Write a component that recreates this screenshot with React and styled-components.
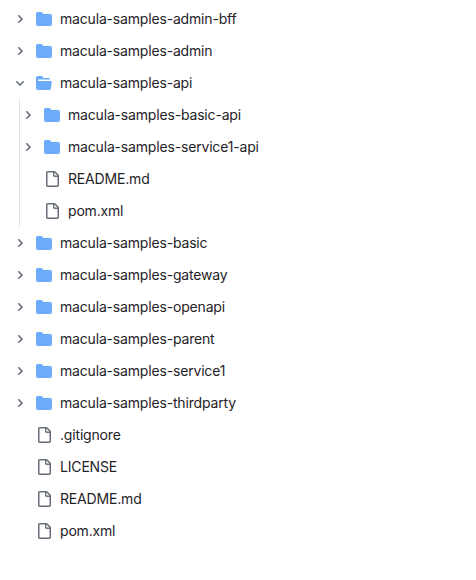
import React from "react";
import styled, { createGlobalStyle } from "styled-components";

const Global = createGlobalStyle`
  body { margin: 0; background: #fff; }
`;
const Tree = styled.ul`
  list-style: none; margin: 0; padding: 3px 0 0 12px;
  box-sizing: border-box; width: 476px; height: 580px;
  font: 14px/32px Inter, sans-serif; letter-spacing: -0.175px; color: #1f2328;
`;
const Branch = styled.ul`
  list-style: none; margin: 0 0 0 7px; padding: 0;
  border-left: 1px solid #dfe2e5;
`;
const Row = styled.div`
  display: flex; align-items: center; height: 32px; white-space: nowrap;
`;
const Toggle = styled.span`
  display: flex; width: 16px; height: 16px; justify-content: center; align-items: center;
  color: #656d76; flex: none;
`;
const IconBox = styled.span`
  display: flex; width: 16px; height: 16px; margin: 0 8px; flex: none;
  color: ${(p) => (p.$folder ? "#6cabfa" : "#656d76")};
`;
const Name = styled.span``;

const paths = {
  right: "M4.7 10c-.2 0-.4-.1-.5-.2-.3-.3-.3-.8 0-1.1L6.9 6 4.2 3.3c-.3-.3-.3-.8 0-1.1.3-.3.8-.3 1.1 0l3.3 3.2c.3.3.3.8 0 1.1L5.3 9.7c-.2.2-.4.3-.6.3Z",
  down: "M6 8.825c-.2 0-.4-.1-.5-.2l-3.3-3.3c-.3-.3-.3-.8 0-1.1.3-.3.8-.3 1.1 0l2.7 2.7 2.7-2.7c.3-.3.8-.3 1.1 0 .3.3.3.8 0 1.1l-3.2 3.2c-.2.2-.4.3-.6.3Z",
  folder: "M1.75 1A1.75 1.75 0 0 0 0 2.75v10.5C0 14.216.784 15 1.75 15h12.5A1.75 1.75 0 0 0 16 13.25v-8.5A1.75 1.75 0 0 0 14.25 3H7.5a.25.25 0 0 1-.2-.1l-.9-1.2C6.07 1.26 5.55 1 5 1H1.75Z",
  open: "M.513 1.513A1.75 1.75 0 0 1 1.75 1h3.5c.55 0 1.07.26 1.4.7l.9 1.2a.25.25 0 0 0 .2.1H13a1 1 0 0 1 1 1v.5H2.75a.75.75 0 0 0 0 1.5h11.978a1 1 0 0 1 .994 1.117L15 13.25A1.75 1.75 0 0 1 13.25 15H1.75A1.75 1.75 0 0 1 0 13.25V2.75c0-.464.184-.91.513-1.237Z",
  file: "M2 1.75C2 .784 2.784 0 3.75 0h6.586c.464 0 .909.184 1.237.513l2.914 2.914c.329.328.513.773.513 1.237v9.586A1.75 1.75 0 0 1 13.25 16h-9.5A1.75 1.75 0 0 1 2 14.25Zm1.75-.25a.25.25 0 0 0-.25.25v12.5c0 .138.112.25.25.25h9.5a.25.25 0 0 0 .25-.25V6h-2.75A1.75 1.75 0 0 1 9 4.25V1.5Zm6.75.062V4.25c0 .138.112.25.25.25h2.688l-.011-.013-2.914-2.914-.013-.011Z",
};
const Glyph = ({ name, size = 16 }) => (
  <svg width={size} height={size} viewBox={`0 0 ${size} ${size}`} fill="currentColor"><path d={paths[name]} /></svg>
);

const items = [
  { n: "macula-samples-admin-bff", d: 1 },
  { n: "macula-samples-admin", d: 1 },
  { n: "macula-samples-api", d: 1, c: [
    { n: "macula-samples-basic-api", d: 1 },
    { n: "macula-samples-service1-api", d: 1 },
    { n: "README.md" }, { n: "pom.xml" },
  ] },
  { n: "macula-samples-basic", d: 1 },
  { n: "macula-samples-gateway", d: 1 },
  { n: "macula-samples-openapi", d: 1 },
  { n: "macula-samples-parent", d: 1 },
  { n: "macula-samples-service1", d: 1 },
  { n: "macula-samples-thirdparty", d: 1 },
  { n: ".gitignore" }, { n: "LICENSE" }, { n: "README.md" }, { n: "pom.xml" },
];

const Item = ({ item }) => (
  <li>
    <Row>
      <Toggle>{item.d && <Glyph size={12} name={item.c ? "down" : "right"} />}</Toggle>
      <IconBox $folder={item.d}><Glyph name={item.c ? "open" : item.d ? "folder" : "file"} /></IconBox>
      <Name>{item.n}</Name>
    </Row>
    {item.c && <Branch>{item.c.map((c) => <Item key={c.n} item={c} />)}</Branch>}
  </li>
);

export default function App() {
  return (
    <>
      <Global />
      <Tree>{items.map((i) => <Item key={i.n} item={i} />)}</Tree>
    </>
  );
}
